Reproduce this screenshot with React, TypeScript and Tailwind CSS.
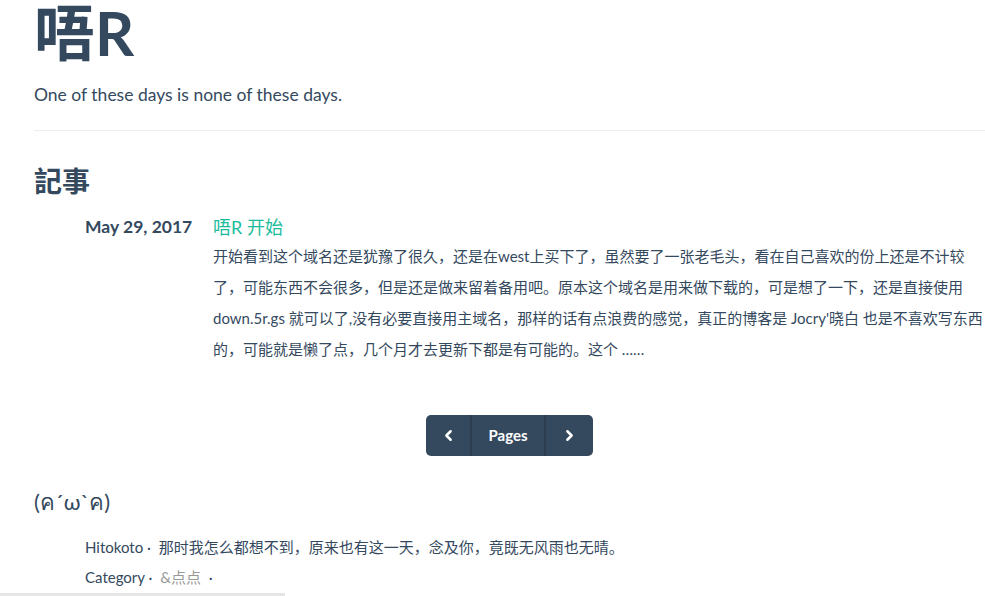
import React from "react";
import { ChevronLeft, ChevronRight } from "lucide-react";

const FONT = "font-['Lato','Noto_Sans_CJK_SC',sans-serif]";

export default function App() {
  const lines = [
    "开始看到这个域名还是犹豫了很久，还是在west上买下了，虽然要了一张老毛头，看在自己喜欢的份上还是不计较",
    "了，可能东西不会很多，但是还是做来留着备用吧。原本这个域名是用来做下载的，可是想了一下，还是直接使用",
    "down.5r.gs 就可以了,没有必要直接用主域名，那样的话有点浪费的感觉，真正的博客是 Jocry'晓白 也是不喜欢写东西",
    "的，可能就是懒了点，几个月才去更新下都是有可能的。这个 ……",
  ];
  return (
    <div className={`${FONT} w-[985px] h-[596px] overflow-hidden bg-white text-[#34495e] pl-[34px]`}>
      <h1 className="text-[61px] leading-[66px] font-bold m-0">唔R</h1>
      <p className="mt-[17px] text-[17.5px] leading-[24px]">One of these days is none of these days.</p>
      <div className="mt-[23px] h-px bg-[#eeeeee]" />
      <h2 className="mt-[32px] text-[28px] leading-[36px] font-bold">記事</h2>
      <div className="mt-[16px] flex pl-[51px]">
        <div className="w-[128px] shrink-0 text-[17.5px] leading-[24px] font-bold whitespace-nowrap">May 29, 2017</div>
        <div className="flex flex-col">
          <a className="text-[18px] leading-[24px] text-[#1abc9c]">唔R 开始</a>
          <div className="mt-[2px] text-[15px] leading-[31px] whitespace-nowrap">
            {lines.map((l, i) => (
              <div key={i}>{l}</div>
            ))}
          </div>
        </div>
      </div>
      <div className="mt-[50px] flex justify-center">
        <div className="flex h-[41px] rounded-[5px] bg-[#34495e] overflow-hidden text-white">
          <div className="w-[46px] flex items-center justify-center border-r-2 border-[#2c3e50]">
            <ChevronLeft size={17} strokeWidth={3.5} />
          </div>
          <div className="w-[74px] flex items-center justify-center border-r-2 border-[#2c3e50] text-[15px] font-bold">
            Pages
          </div>
          <div className="w-[47px] flex items-center justify-center">
            <ChevronRight size={17} strokeWidth={3.5} />
          </div>
        </div>
      </div>
      <div className="mt-[31px] text-[22px] leading-[30px]">(ค´ω`ค)</div>
      <div className="mt-[15px] pl-[51px] text-[15px] leading-[30px]">
        <div>
          Hitokoto · <span className="ml-[4px]">那时我怎么都想不到，原来也有这一天，念及你，竟既无风雨也无晴。</span>
        </div>
        <div>
          Category · <span className="ml-[4px] text-[#999999]">&amp;点点</span> <span className="ml-[4px]">·</span>
        </div>
      </div>
      <div className="-ml-[34px] mt-[1px] w-[285px] h-[3px] bg-[#e6e6e6]" />
    </div>
  );
}
